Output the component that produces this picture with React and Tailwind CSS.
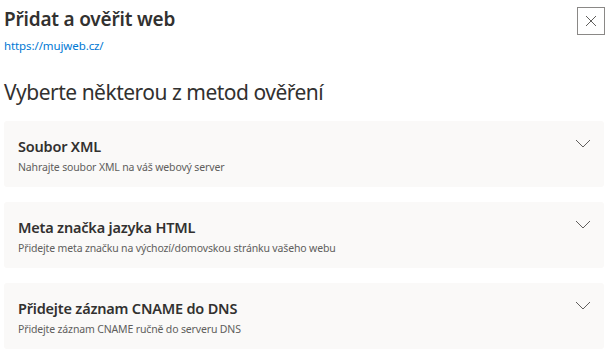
import React from "react";

const font = { fontFamily: '"Noto Sans", "Open Sans", Arial, sans-serif' };

function Chevron() {
  return (
    <svg width="16" height="9" viewBox="0 0 16 9" fill="none" className="shrink-0">
      <path d="M1 1 L8 8 L15 1" stroke="#605e5c" strokeWidth="1" />
    </svg>
  );
}

function Card({ title, desc }) {
  return (
    <div className="h-[66px] bg-[#faf9f8] rounded-[3px] flex items-start justify-between pl-[14px] pr-[13px]">
      <div className="flex flex-col pt-[15px]">
        <div className="text-[14.5px] leading-[20px] font-semibold text-[#323130] tracking-[-0.2px]">{title}</div>
        <div className="text-[10.5px] leading-[16px] text-[#605e5c] mt-[3px] tracking-[-0.15px]">{desc}</div>
      </div>
      <div className="pt-[18px]">
        <Chevron />
      </div>
    </div>
  );
}

export default function App() {
  return (
    <div style={font} className="w-[614px] h-[360px] bg-white overflow-hidden pl-[4px] pr-[10px]">
      <div className="flex justify-between items-start">
        <div className="flex flex-col">
          <div className="text-[19px] leading-[26px] mt-[6px] font-semibold text-[#323130] tracking-[-0.2px]">Přidat a ověřit web</div>
          <div className="text-[11.5px] leading-[16px] mt-[6px] text-[#0078d4] tracking-[-0.1px]">https://mujweb.cz/</div>
        </div>
        <button className="mt-[7px] mr-[-1px] w-[28px] h-[28px] border border-[#8a8886] flex items-center justify-center bg-white">
          <svg width="12" height="12" viewBox="0 0 12 12">
            <path d="M1 1 L11 11 M11 1 L1 11" stroke="#605e5c" strokeWidth="1" />
          </svg>
        </button>
      </div>
      <div className="text-[21px] leading-[30px] mt-[23px] text-[#323130] tracking-[-0.5px]">Vyberte některou z metod ověření</div>
      <div className="flex flex-col gap-[15px] mt-[14px]">
        <Card title="Soubor XML" desc="Nahrajte soubor XML na váš webový server" />
        <Card title="Meta značka jazyka HTML" desc="Přidejte meta značku na výchozí/domovskou stránku vašeho webu" />
        <Card title="Přidejte záznam CNAME do DNS" desc="Přidejte záznam CNAME ručně do serveru DNS" />
      </div>
    </div>
  );
}
